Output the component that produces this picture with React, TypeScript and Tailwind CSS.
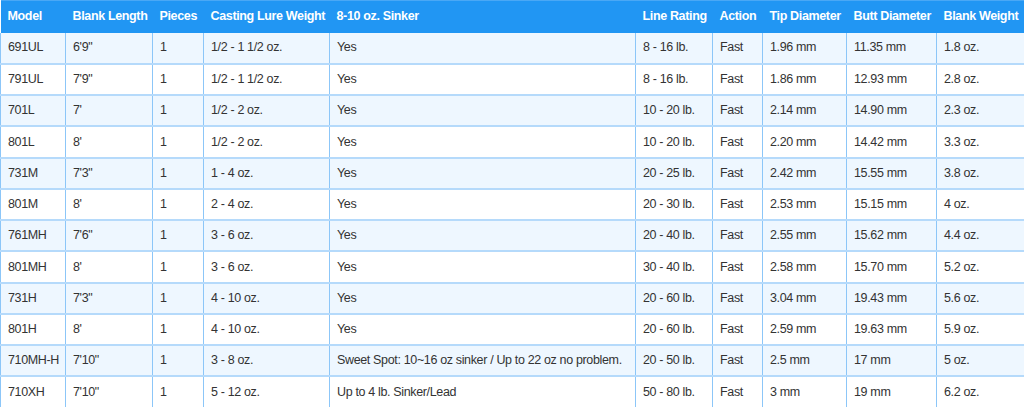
const headers = [
  "Model",
  "Blank Length",
  "Pieces",
  "Casting Lure Weight",
  "8-10 oz. Sinker",
  "Line Rating",
  "Action",
  "Tip Diameter",
  "Butt Diameter",
  "Blank Weight",
];

const widths = [65, 87, 51, 126, 306, 77, 50, 84, 90, 88];

const rows: string[][] = [
  ["691UL", "6'9\"", "1", "1/2 - 1 1/2 oz.", "Yes", "8 - 16 lb.", "Fast", "1.96 mm", "11.35 mm", "1.8 oz."],
  ["791UL", "7'9\"", "1", "1/2 - 1 1/2 oz.", "Yes", "8 - 16 lb.", "Fast", "1.86 mm", "12.93 mm", "2.8 oz."],
  ["701L", "7'", "1", "1/2 - 2 oz.", "Yes", "10 - 20 lb.", "Fast", "2.14 mm", "14.90 mm", "2.3 oz."],
  ["801L", "8'", "1", "1/2 - 2 oz.", "Yes", "10 - 20 lb.", "Fast", "2.20 mm", "14.42 mm", "3.3 oz."],
  ["731M", "7'3\"", "1", "1 - 4 oz.", "Yes", "20 - 25 lb.", "Fast", "2.42 mm", "15.55 mm", "3.8 oz."],
  ["801M", "8'", "1", "2 - 4 oz.", "Yes", "20 - 30 lb.", "Fast", "2.53 mm", "15.15 mm", "4 oz."],
  ["761MH", "7'6\"", "1", "3 - 6 oz.", "Yes", "20 - 40 lb.", "Fast", "2.55 mm", "15.62 mm", "4.4 oz."],
  ["801MH", "8'", "1", "3 - 6 oz.", "Yes", "30 - 40 lb.", "Fast", "2.58 mm", "15.70 mm", "5.2 oz."],
  ["731H", "7'3\"", "1", "4 - 10 oz.", "Yes", "20 - 60 lb.", "Fast", "3.04 mm", "19.43 mm", "5.6 oz."],
  ["801H", "8'", "1", "4 - 10 oz.", "Yes", "20 - 60 lb.", "Fast", "2.59 mm", "19.63 mm", "5.9 oz."],
  ["710MH-H", "7'10\"", "1", "3 - 8 oz.", "Sweet Spot: 10~16 oz sinker / Up to 22 oz no problem.", "20 - 50 lb.", "Fast", "2.5 mm", "17 mm", "5 oz."],
  ["710XH", "7'10\"", "1", "5 - 12 oz.", "Up to 4 lb. Sinker/Lead", "50 - 80 lb.", "Fast", "3 mm", "19 mm", "6.2 oz."],
];

export default function App() {
  return (
    <div className="h-[407px] w-[1024px] overflow-hidden bg-white font-['Liberation_Sans',Arial,sans-serif] text-[12.5px] tracking-[-0.35px] text-[#333]">
      <table className="w-[1024px] table-fixed border-collapse">
        <colgroup>
          {widths.map((w, i) => (
            <col key={i} style={{ width: w }} />
          ))}
        </colgroup>
        <thead>
          <tr className="h-[32px] bg-[#2196f3] text-white">
            {headers.map((h) => (
              <th
                key={h}
                className="border-t border-[#4aa8f5] px-[7px] text-left font-bold whitespace-nowrap"
              >
                {h}
              </th>
            ))}
          </tr>
        </thead>
        <tbody>
          {rows.map((r, i) => (
            <tr
              key={r[0]}
              className={`h-[31.25px] ${i % 2 === 0 ? "bg-[#eef7ff]" : "bg-white"}`}
            >
              {r.map((c, j) => (
                <td
                  key={j}
                  className="border-x border-b-2 border-x-[#8cc6f8] border-b-[#b5dafb] px-[7px] whitespace-nowrap"
                >
                  {c}
                </td>
              ))}
            </tr>
          ))}
        </tbody>
      </table>
    </div>
  );
}
